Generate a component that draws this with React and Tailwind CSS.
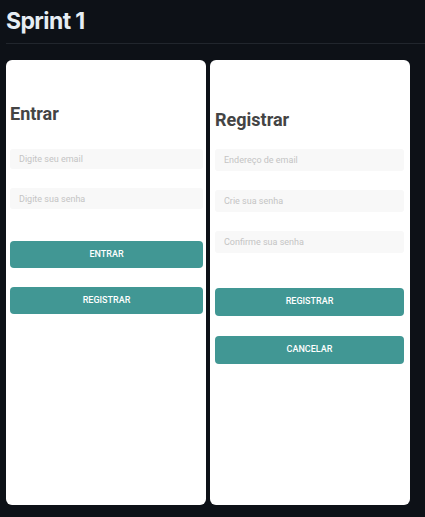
import React from 'react';

// Sprint 1 - login / register screens side by side

const Input = ({ placeholder, className = '' }) => (
  <input
    type="text"
    placeholder={placeholder}
    className={`w-full rounded-[3px] bg-[#f8f8f8] px-[9px] text-[9px] text-[#444] placeholder:text-[#c4c4c4] outline-none ${className}`}
  />
);

const Button = ({ children, className = '' }) => (
  <button
    className={`w-full rounded-[4px] bg-[#419794] text-[9px] font-medium uppercase text-white ${className}`}
  >
    {children}
  </button>
);

const Login = () => (
  <div className="flex h-[445px] w-[200px] flex-col rounded-[6px] bg-white pl-[4px] pr-[3px] pt-[43px]">
    <h2 className="text-[18px] font-bold leading-[21px] text-[#444]">Entrar</h2>
    <Input placeholder="Digite seu email" className="mt-[25px] h-[20px]" />
    <Input placeholder="Digite sua senha" className="mt-[19px] h-[21px]" />
    <Button className="mt-[32px] h-[27px]">Entrar</Button>
    <Button className="mt-[19px] h-[27px]">Registrar</Button>
  </div>
);

const Register = () => (
  <div className="flex h-[445px] w-[200px] flex-col rounded-[6px] bg-white pl-[5px] pr-[6px] pt-[49px]">
    <h2 className="text-[18px] font-bold leading-[21px] text-[#444]">Registrar</h2>
    <Input placeholder="Endereço de email" className="mt-[19px] h-[22px]" />
    <Input placeholder="Crie sua senha" className="mt-[19px] h-[22px]" />
    <Input placeholder="Confirme sua senha" className="mt-[19px] h-[22px]" />
    <Button className="mt-[35px] h-[28px]">Registrar</Button>
    <Button className="mt-[20px] h-[28px]">Cancelar</Button>
  </div>
);

export default function App() {
  return (
    <div className="min-h-[517px] w-full bg-[#0d1117] pb-[12px]" style={{ fontFamily: 'Roboto, "Noto Sans", sans-serif' }}>
      <div className="ml-[6px] border-b border-[#21262d] pb-[8px] pt-[7px]">
        <h1
          className="text-[23px] font-bold leading-[28px] tracking-[-0.6px] text-[#e6edf3]"
          style={{ fontFamily: 'Inter, "Liberation Sans", sans-serif' }}
        >
          Sprint 1
        </h1>
      </div>
      <div className="mt-[16px] flex gap-[4px] pl-[6px]">
        <Login />
        <Register />
      </div>
    </div>
  );
}
